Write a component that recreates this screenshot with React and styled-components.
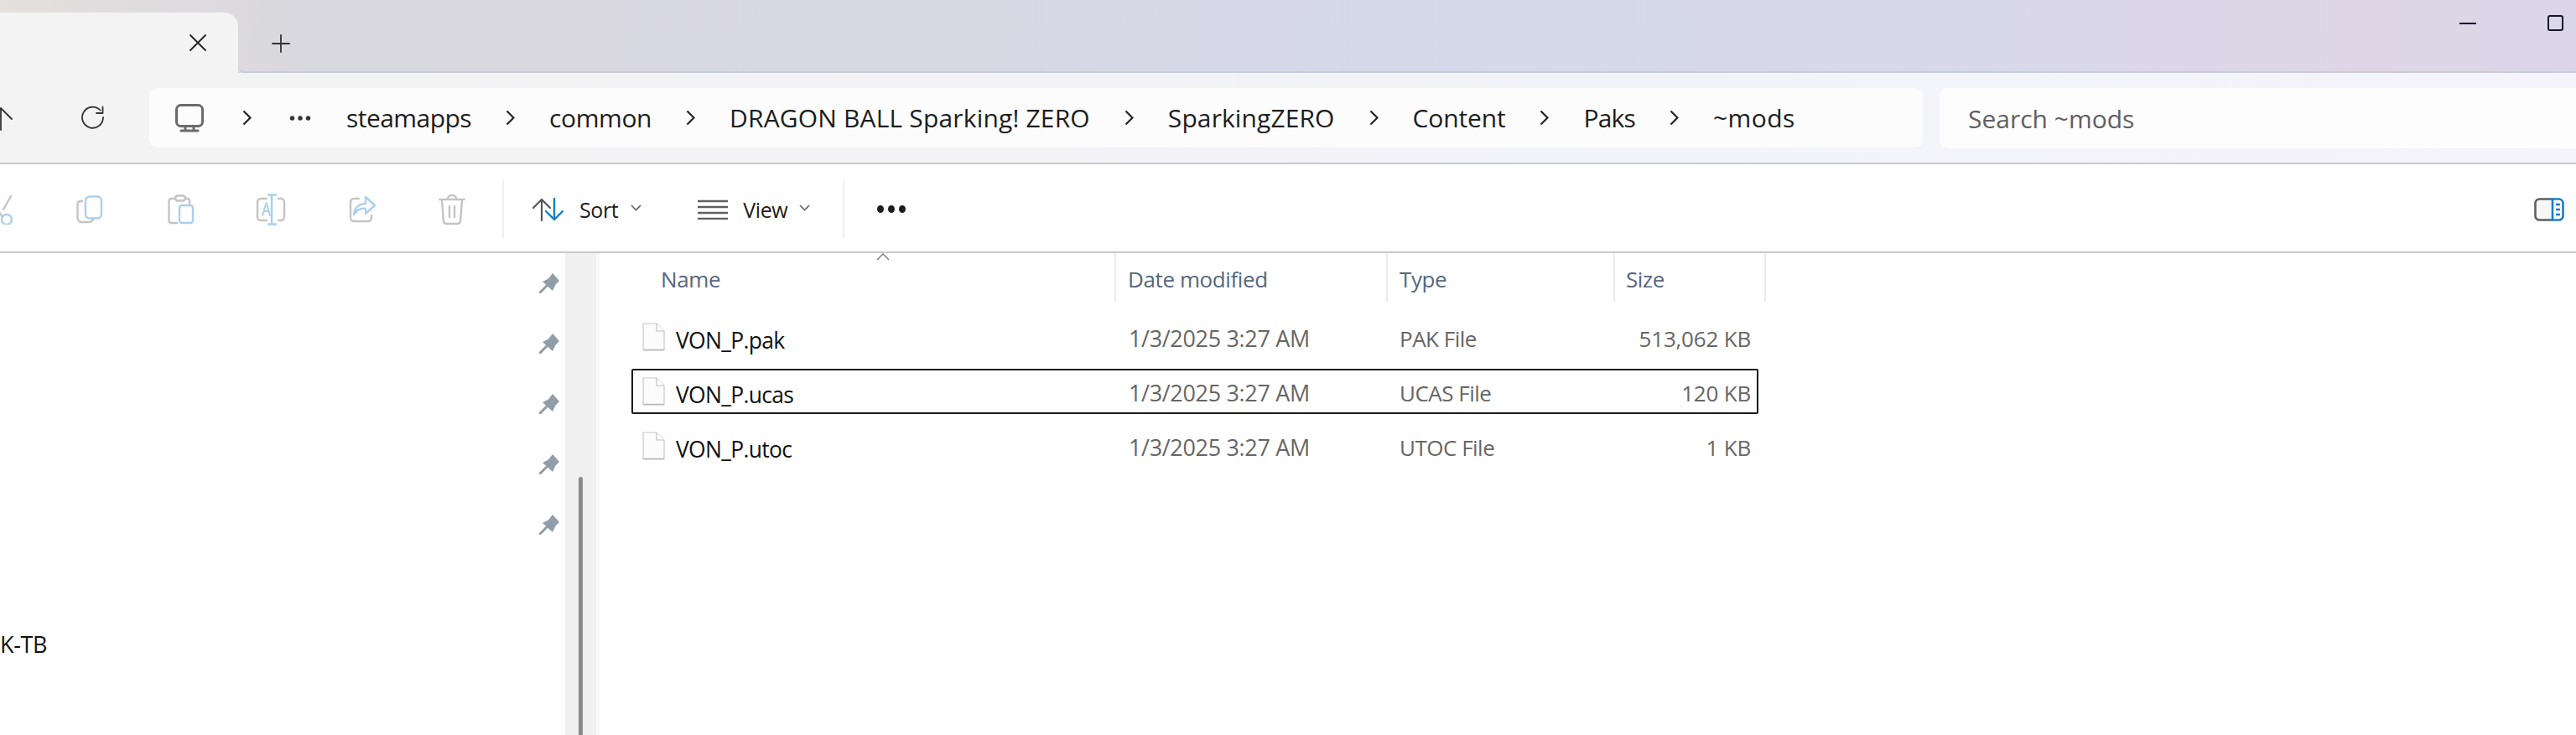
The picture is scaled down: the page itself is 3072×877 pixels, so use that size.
import React from "react";
import styled, { createGlobalStyle } from "styled-components";

const Global = createGlobalStyle`
  html, body { margin: 0; padding: 0; background: #fff; }
  #root { width: 3072px; height: 877px; overflow: hidden; }
  * { box-sizing: border-box; }
`;

const Window = styled.div`
  width: 3072px; height: 877px; overflow: hidden; display: flex; flex-direction: column;
  font-family: "Open Sans", "Noto Sans", "Liberation Sans", sans-serif; color: #1a1a1a; background: #fff;
`;
const TitleBar = styled.div`
  height: 87px; flex: none; display: flex; align-items: flex-end;
  background: linear-gradient(90deg, #e4e0de 0, #d9d8de 12%, #d8d8e4 35%, #d5d9ea 60%, #d8d8ea 75%, #ded6e6 92%, #dad6e8 100%);
`;
const Tab = styled.div`
  width: 284px; height: 72px; flex: none; background: #f3f3f3; border-top-right-radius: 16px;
  display: flex; justify-content: flex-end; padding: 26px 38px 0 0;
`;
const TabRest = styled.div`
  flex: 1; height: 87px; display: flex; border-bottom: 2px solid #c8cad6; border-bottom-left-radius: 8px;
  padding-left: 40px;
`;
const PlusBtn = styled.div` margin-top: 41px; height: 22px; `;
const WinControls = styled.div`
  margin-left: auto; display: flex; gap: 85px; padding: 18px 15px 0 0; align-items: flex-start;
`;
const MinBtn = styled.div` width: 20px; height: 2px; background: #14142a; margin-top: 9px; `;
const MaxBtn = styled.div` width: 19px; height: 19px; border: 2px solid #14142a; border-radius: 3px; `;

const NavBar = styled.div`
  height: 109px; flex: none; display: flex; align-items: flex-start; padding-top: 18px;
  background: linear-gradient(90deg, #f3f3f3 0, #f3f3f6 40%, #f3f4fa 65%, #f5f3fb 100%);
  border-bottom: 2px solid #c9c9c9;
`;
const NavIcons = styled.div`
  width: 178px; flex: none; height: 71px; display: flex; align-items: center; padding-left: 97px; position: relative;
`;
const UpArrow = styled.svg` position: absolute; left: -14px; top: 22px; `;
const Address = styled.div`
  width: 2115px; height: 71px; flex: none; background: #fcfcfd; border-radius: 9px; display: flex; align-items: center;
  padding-left: 31px; font-size: 30px;
`;
const Crumb = styled.span`
  color: #1c1c1c; white-space: nowrap; margin-left: ${p => p.$ml ?? 0}px; letter-spacing: ${p => p.$ls}px;
`;
const Chevron = styled.svg` flex: none; margin: 0 ${p => p.$mr ?? 41}px 0 ${p => p.$ml ?? 41}px; `;
const Search = styled.div`
  margin-left: 20px; flex: 1; height: 72px; background: #fdfdfe; border-radius: 9px 0 0 9px; display: flex; align-items: center;
  padding-left: 34px; font-size: 30px; color: #5f5f5f;
`;

const Toolbar = styled.div`
  height: 106px; flex: none; display: flex; align-items: center; background: #fff; border-bottom: 2px solid #c9c9c9; padding-top: 3px;
`;
const IconGroup = styled.div`
  width: 599px; flex: none; display: flex; align-items: center; height: 100%; position: relative;
`;
const Sep = styled.div` width: 2px; height: 71px; background: #f0f0f0; flex: none; `;
const ToolText = styled.span` font-size: 25px; letter-spacing: -0.4px; color: #1c1c1c; `;
const ToolBtn = styled.div` display: flex; align-items: center; flex: none; `;
const More = styled.div` display: flex; gap: 5px; margin-left: 39px; `;
const Dot = styled.i` width: 8px; height: 9px; border-radius: 50%; background: #1c1c1c; display: block; `;
const PaneIcon = styled.svg` margin-left: auto; margin-right: 14px; `;

const Main = styled.div` flex: 1; display: flex; min-height: 0; `;
const Side = styled.div`
  width: 674px; flex: none; position: relative; display: flex; flex-direction: column; align-items: flex-end; padding: 24px 7px 0 0;
`;
const Pins = styled.div` display: flex; flex-direction: column; gap: 48px; `;
const DriveLabel = styled.div` align-self: flex-start; margin-top: 113px; font-size: 27px; letter-spacing: -0.4px; line-height: 36px; color: #111; `;
const Track = styled.div`
  width: 37px; flex: none; background: #f0f0f0; display: flex; justify-content: center; padding-top: 267px;
`;
const Thumb = styled.div` width: 5px; height: 320px; background: #8a8a8a; border-radius: 3px 3px 0 0; `;
const Strip = styled.div` width: 5px; flex: none; background: #f8f8f8; `;

const List = styled.div` flex: 1; `;
const Header = styled.div`
  display: grid; grid-template-columns: 615px 324px 271px 180px; height: 58px; width: 1390px;
`;
const HeadCell = styled.div`
  position: relative; border-right: 2px solid #ececec; display: flex; align-items: center; padding-left: ${p => p.$pad}px; padding-top: 3px;
  font-size: 26px; letter-spacing: -0.4px; color: #56677c;
`;
const SortCaret = styled.svg` position: absolute; left: 329px; top: 0; `;
const Rows = styled.div` padding: 15px 0 0 37px; display: flex; flex-direction: column; gap: 11px; `;
const Row = styled.div`
  display: grid; grid-template-columns: 578px 324px 271px 171px; width: 1344px; height: 54px; align-items: center;
  border: 2px solid ${p => (p.$focus ? "#1a1a1a" : "transparent")}; border-radius: 2px;
`;
const NameCell = styled.div` display: flex; align-items: flex-start; height: 100%; padding: 8px 0 0 11px; gap: 13px; `;
const FileName = styled.span` font-size: 26.5px; letter-spacing: -0.7px; color: #111; line-height: 36px; margin-top: 3px; `;
const Cell = styled.div`
  font-size: ${p => p.$fs}px; letter-spacing: ${p => p.$ls}px; color: #666; padding-left: ${p => p.$pad ?? 0}px; margin-top: 3px;
  text-align: ${p => p.$right ? "right" : "left"}; padding-right: ${p => p.$right ? 11 : 0}px; white-space: nowrap;
`;

const Ico = ({ w = 36, h = 36, children, vb }) => (
  <svg width={w} height={h} viewBox={vb || `0 0 ${w} ${h}`} fill="none" strokeLinecap="round" strokeLinejoin="round" style={{ flex: "none" }}>{children}</svg>
);
const G = "#c4c4c4", B = "#aad0ec";

const Pin = () => (
  <svg width="24" height="24" viewBox="0 0 24 24" style={{ display: "block" }}>
    <path d="M16 0 L24 9 L19.5 13.5 L16 21 L4 10 L11 6.5 Z" fill="#8f9ea8" />
    <path d="M1 23 L9 15" stroke="#8f9ea8" strokeWidth="3" strokeLinecap="round" />
  </svg>
);
const FileIcon = () => (
  <svg width="27" height="34" viewBox="0 0 27 34" fill="none" style={{ flex: "none" }}>
    <path d="M1 1 H17 L26 10 V33 H1 Z" fill="#fcfcfc" stroke="#c8c8c8" strokeWidth="1.2" />
    <path d="M17 1 V10 H26" fill="#fff" stroke="#c0c0c0" strokeWidth="1.2" />
    <path d="M1.5 32.5 H25.5" stroke="#b8b8b8" strokeWidth="1.5" />
  </svg>
);
const Chev = ({ ml, mr }) => (
  <Chevron $ml={ml} $mr={mr} width="11" height="19" viewBox="0 0 11 19" fill="none">
    <path d="M1.5 1.5 L9.5 9.5 L1.5 17.5" stroke="#222" strokeWidth="2.2" />
  </Chevron>
);
const SmallChev = ({ ml }) => (
  <svg width="13" height="8" viewBox="0 0 13 8" fill="none" style={{ marginLeft: ml, marginTop: -4, flex: "none" }}>
    <path d="M1 1 L6.5 6.5 L12 1" stroke="#666" strokeWidth="1.6" />
  </svg>
);

const rows = [
  { n: "VON_P.pak", t: "PAK File", s: "513,062 KB" },
  { n: "VON_P.ucas", t: "UCAS File", s: "120 KB", focus: true },
  { n: "VON_P.utoc", t: "UTOC File", s: "1 KB" },
];

export default function App() {
  return (
    <Window>
      <Global />
      <TitleBar>
        <Tab>
          <Ico w={20} h={20}><path d="M1 1 L19 19 M19 1 L1 19" stroke="#222" strokeWidth="1.8" /></Ico>
        </Tab>
        <TabRest>
          <PlusBtn>
            <Ico w={22} h={22}><path d="M11 1 V21 M1 11 H21" stroke="#333" strokeWidth="1.8" /></Ico>
          </PlusBtn>
          <WinControls>
            <MinBtn />
            <MaxBtn />
          </WinControls>
        </TabRest>
      </TitleBar>

      <NavBar>
        <NavIcons>
          <UpArrow width="30" height="30" viewBox="0 0 30 30" fill="none">
            <path d="M15 28 V2 M2 15 L15 2 L28 15" stroke="#333" strokeWidth="1.8" strokeLinecap="round" strokeLinejoin="round" />
          </UpArrow>
          <Ico w={28} h={30}>
            <path d="M22.5 5.5 A12.5 12.5 0 1 0 26 14" stroke="#333" strokeWidth="1.8" />
            <path d="M25.5 1.5 V9 H18" stroke="#333" strokeWidth="1.8" />
          </Ico>
        </NavIcons>
        <Address>
          <Ico w={34} h={34}>
            <rect x="1.5" y="1.5" width="31" height="25" rx="5" stroke="#6b6b6b" strokeWidth="3" />
            <path d="M12 27 V31 M22 27 V31 M7 32 H27" stroke="#6b6b6b" strokeWidth="3" />
          </Ico>
          <Chev ml={46} mr={45} />
          <Ico w={26} h={8}>
            <circle cx="3.5" cy="4" r="2.7" fill="#333" /><circle cx="13" cy="4" r="2.7" fill="#333" /><circle cx="22.5" cy="4" r="2.7" fill="#333" />
          </Ico>
          <Crumb $ml={42} $ls={-0.55}>steamapps</Crumb>
          <Chev />
          <Crumb $ls={-0.4}>common</Crumb>
          <Chev />
          <Crumb $ls={0.17}>DRAGON BALL Sparking! ZERO</Crumb>
          <Chev />
          <Crumb $ls={0.1}>SparkingZERO</Crumb>
          <Chev />
          <Crumb $ls={-0.15}>Content</Crumb>
          <Chev />
          <Crumb $ls={-0.8}>Paks</Crumb>
          <Chev />
          <Crumb $ls={0.4}>~mods</Crumb>
        </Address>
        <Search>Search ~mods</Search>
      </NavBar>

      <Toolbar>
        <IconGroup>
          <ToolBtn style={{ marginLeft: -15 }}>
            <Ico w={30} h={36}>
              <path d="M28 2 L19 18" stroke={G} strokeWidth="2.4" />
              <path d="M13 20 L18 27" stroke={G} strokeWidth="2.4" />
              <circle cx="23" cy="30" r="6" stroke={B} strokeWidth="2.4" />
            </Ico>
          </ToolBtn>
          <ToolBtn style={{ marginLeft: 76 }}>
            <Ico w={32} h={34}>
              <path d="M7 7 H5 A4 4 0 0 0 1.5 11 V27 A5 5 0 0 0 6 32 H16 A5 5 0 0 0 20 28" stroke={G} strokeWidth="2.4" />
              <rect x="11" y="1.5" width="19" height="26" rx="5" stroke={B} strokeWidth="2.4" />
            </Ico>
          </ToolBtn>
          <ToolBtn style={{ marginLeft: 77 }}>
            <Ico w={32} h={36}>
              <path d="M8 5 H4 A3 3 0 0 0 1.5 8 V31 A3 3 0 0 0 4 34 H11 M24 5 H21 M24 5 A3 3 0 0 1 26 8 V11" stroke={G} strokeWidth="2.4" />
              <rect x="9" y="1.5" width="12" height="6" rx="3" stroke={G} strokeWidth="2.4" />
              <rect x="14" y="13" width="16" height="21" rx="3" stroke={B} strokeWidth="2.4" />
            </Ico>
          </ToolBtn>
          <ToolBtn style={{ marginLeft: 73 }}>
            <Ico w={36} h={38}>
              <path d="M13 6 H6 A4 4 0 0 0 2 10 V28 A4 4 0 0 0 6 32 H13 M27 6 H30 A4 4 0 0 1 34 10 V28 A4 4 0 0 1 30 32 H27" stroke={G} strokeWidth="2.4" />
              <path d="M19 2 V36 M15 1.5 H24 M15 36.5 H24" stroke={B} strokeWidth="2.4" />
              <path d="M8 26 L12.5 11 L17 26 M9.5 21 H15.5" stroke={B} strokeWidth="2" />
            </Ico>
          </ToolBtn>
          <ToolBtn style={{ marginLeft: 75 }}>
            <Ico w={32} h={36}>
              <path d="M12 5 H6 A4 4 0 0 0 2 9 V28 A4 4 0 0 0 6 32 H23 A4 4 0 0 0 27 28 V25" stroke={G} strokeWidth="2.4" />
              <path d="M6 24 C7 15 13 11 20 11 V3 L31 13 L20 23 V17 C14 16 9 19 6 24 Z" stroke={B} strokeWidth="2.4" />
            </Ico>
          </ToolBtn>
          <ToolBtn style={{ marginLeft: 75 }}>
            <Ico w={32} h={38}>
              <path d="M1.5 7 H30.5 M11 6 A5 4 0 0 1 21 6" stroke={G} strokeWidth="2.4" />
              <path d="M4 8 L6 33 A3 3 0 0 0 9 36 H23 A3 3 0 0 0 26 33 L28 8" stroke={G} strokeWidth="2.4" />
              <path d="M13 15 V28 M19 15 V28" stroke={G} strokeWidth="2.4" />
            </Ico>
          </ToolBtn>
        </IconGroup>
        <Sep />
        <ToolBtn style={{ marginLeft: 34 }}>
          <Ico w={37} h={28}>
            <path d="M11 27 V2 M1 12 L11 2 L21 12" stroke="#555" strokeWidth="2.2" />
            <path d="M26 1 V26 M16 16 L26 26 L36 16" stroke="#1a7fc9" strokeWidth="2.4" />
          </Ico>
          <ToolText style={{ marginLeft: 19 }}>Sort</ToolText>
          <SmallChev ml={15} />
        </ToolBtn>
        <ToolBtn style={{ marginLeft: 67 }}>
          <Ico w={36} h={24}>
            <path d="M0 2 H36 M0 9 H36 M0 16 H36 M0 23 H36" stroke="#5f5f5f" strokeWidth="2.4" strokeLinecap="butt" />
          </Ico>
          <ToolText style={{ marginLeft: 18 }}>View</ToolText>
          <SmallChev ml={14} />
        </ToolBtn>
        <Sep style={{ marginLeft: 39 }} />
        <More><Dot /><Dot /><Dot /></More>
        <PaneIcon width="36" height="28" viewBox="0 0 36 28" fill="none">
          <path d="M22 1.5 H7 A5 5 0 0 0 1.5 7 V21 A5 5 0 0 0 7 26.5 H22" stroke="#5f5f5f" strokeWidth="2.6" fill="#f7f7f7" />
          <path d="M22 1.5 H29 A5 5 0 0 1 34.5 7 V21 A5 5 0 0 1 29 26.5 H22 Z" stroke="#1a7fc9" strokeWidth="2.6" />
          <path d="M26 8 H31 M26 14 H31 M26 20 H31" stroke="#1a7fc9" strokeWidth="2.6" />
        </PaneIcon>
      </Toolbar>

      <Main>
        <Side>
          <Pins>{[0, 1, 2, 3, 4].map(i => <Pin key={i} />)}</Pins>
          <DriveLabel>K-TB</DriveLabel>
        </Side>
        <Track><Thumb /></Track>
        <Strip />
        <List>
          <Header>
            <HeadCell $pad={72}>
              Name
              <SortCaret width="16" height="9" viewBox="0 0 16 9" fill="none">
                <path d="M1 8 L8 1 L15 8" stroke="#777" strokeWidth="1.3" />
              </SortCaret>
            </HeadCell>
            <HeadCell $pad={14}>Date modified</HeadCell>
            <HeadCell $pad={14}>Type</HeadCell>
            <HeadCell $pad={13}>Size</HeadCell>
          </Header>
          <Rows>
            {rows.map(r => (
              <Row key={r.n} $focus={r.focus}>
                <NameCell>
                  <FileIcon />
                  <FileName>{r.n}</FileName>
                </NameCell>
                <Cell $pad={13} $fs={27} $ls={-0.33}>1/3/2025 3:27 AM</Cell>
                <Cell $pad={12} $fs={26} $ls={-0.5}>{r.t}</Cell>
                <Cell $right $fs={26} $ls={-0.2}>{r.s}</Cell>
              </Row>
            ))}
          </Rows>
        </List>
      </Main>
    </Window>
  );
}
